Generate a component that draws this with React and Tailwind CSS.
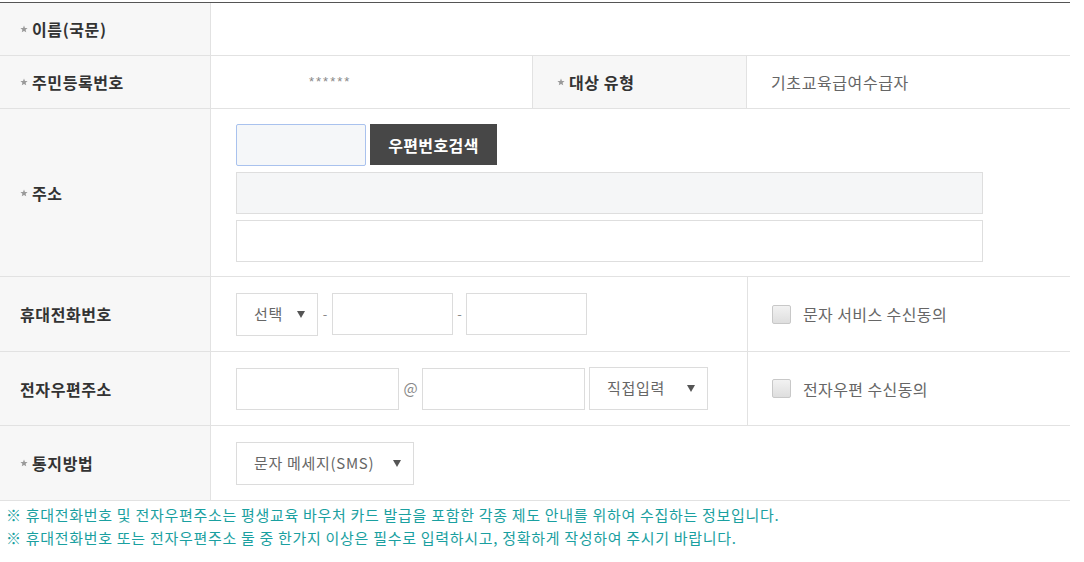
import React from 'react';

const font = { fontFamily: '"Noto Sans CJK KR", "Noto Sans", sans-serif' };

function Star() {
  return (
    <svg width="8" height="8" viewBox="0 0 10 10" className="mr-[4px] shrink-0">
      <polygon points="5,0.5 6.2,3.6 9.5,3.8 7,5.9 7.8,9.2 5,7.4 2.2,9.2 3,5.9 0.5,3.8 3.8,3.6" fill="#9a9a9a" />
    </svg>
  );
}

function Arrow() {
  return (
    <svg width="8" height="7" viewBox="0 0 8 7">
      <polygon points="0,0 8,0 4,7" fill="#555" />
    </svg>
  );
}

function Label({ star, children, className = '' }) {
  return (
    <div className={`w-[211px] shrink-0 bg-[#f7f7f7] border-r border-[#e2e2e2] flex items-center pl-[20px] text-[16px] tracking-[0.6px] font-bold text-[#333] ${className}`}>
      {star && <Star />}
      {children}
    </div>
  );
}

function Select({ label, className = '' }) {
  return (
    <div className={`h-[43px] border border-[#dcdcdc] bg-white flex items-center justify-between pl-[17px] pr-[12px] text-[15px] tracking-[0.7px] text-[#666] ${className}`}>
      <span>{label}</span>
      <Arrow />
    </div>
  );
}

function Box({ className = '' }) {
  return <div className={`h-[42px] border border-[#dcdcdc] bg-white ${className}`} />;
}

function Check({ children }) {
  return (
    <label className="flex items-center gap-[12px] text-[16px] tracking-[0.4px] text-[#666]">
      <span className="w-[19px] h-[19px] rounded-[2px] border border-[#c8c8c8] bg-gradient-to-b from-[#f2f2f2] to-[#dedede]" />
      {children}
    </label>
  );
}

export default function App() {
  return (
    <div style={font} className="bg-white w-[1084px] h-[562px] pt-[2px]">
      <div className="w-[1070px] border-t border-[#555]">
        <div className="flex h-[53px] border-b border-[#e2e2e2]">
          <Label star>이름(국문)</Label>
          <div className="flex-1" />
        </div>

        <div className="flex h-[53px] border-b border-[#e2e2e2]">
          <Label star>주민등록번호</Label>
          <div className="w-[321px] flex items-center pl-[98px] text-[13px] text-[#888] tracking-[2px] font-['Liberation_Sans']">******</div>
          <Label star className="w-[215px] border-l pl-[24px]">대상 유형</Label>
          <div className="flex-1 flex items-center pl-[24px] text-[16px] tracking-[0.6px] text-[#666]">기초교육급여수급자</div>
        </div>

        <div className="flex h-[168px] border-b border-[#e2e2e2]">
          <Label star>주소</Label>
          <div className="flex-1 flex flex-col gap-[6px] pl-[25px] pt-[15px]">
            <div className="flex gap-[4px]">
              <div className="w-[130px] h-[42px] border border-[#a9c2ee] rounded-[2px] bg-[#f5f7f9]" />
              <button className="w-[127px] h-[41px] bg-[#474747] text-white text-[16px] tracking-[0.4px] font-bold">우편번호검색</button>
            </div>
            <div className="w-[747px] h-[42px] border border-[#dedede] bg-[#f5f6f7]" />
            <div className="w-[747px] h-[42px] border border-[#dedede] bg-white" />
          </div>
        </div>

        <div className="flex h-[75px] border-b border-[#e2e2e2]">
          <Label>휴대전화번호</Label>
          <div className="w-[536px] flex items-center pl-[25px] text-[#888] text-[13px]">
            <Select label="선택" className="w-[82px]" />
            <span className="w-[14px] text-center">-</span>
            <Box className="w-[121px]" />
            <span className="w-[13px] text-center">-</span>
            <Box className="w-[121px]" />
          </div>
          <div className="flex-1 border-l border-[#e2e2e2] flex items-center pl-[24px]">
            <Check>문자 서비스 수신동의</Check>
          </div>
        </div>

        <div className="flex h-[74px] border-b border-[#e2e2e2]">
          <Label>전자우편주소</Label>
          <div className="w-[536px] flex items-center pl-[25px] text-[#888] text-[15px]">
            <Box className="w-[163px]" />
            <span className="w-[23px] text-center">@</span>
            <Box className="w-[163px]" />
            <Select label="직접입력" className="w-[119px] ml-[4px]" />
          </div>
          <div className="flex-1 border-l border-[#e2e2e2] flex items-center pl-[24px]">
            <Check>전자우편 수신동의</Check>
          </div>
        </div>

        <div className="flex h-[75px] border-b border-[#e2e2e2]">
          <Label star>통지방법</Label>
          <div className="flex-1 flex items-center pl-[25px]">
            <Select label="문자 메세지(SMS)" className="w-[178px]" />
          </div>
        </div>

        <div className="pl-[6px] pt-[2px] text-[15px] tracking-[0.7px] leading-[23px] text-[#1aa0a0]">
          <p>※ 휴대전화번호 및 전자우편주소는 평생교육 바우처 카드 발급을 포함한 각종 제도 안내를 위하여 수집하는 정보입니다.</p>
          <p>※ 휴대전화번호 또는 전자우편주소 둘 중 한가지 이상은 필수로 입력하시고, 정확하게 작성하여 주시기 바랍니다.</p>
        </div>
      </div>
    </div>
  );
}
